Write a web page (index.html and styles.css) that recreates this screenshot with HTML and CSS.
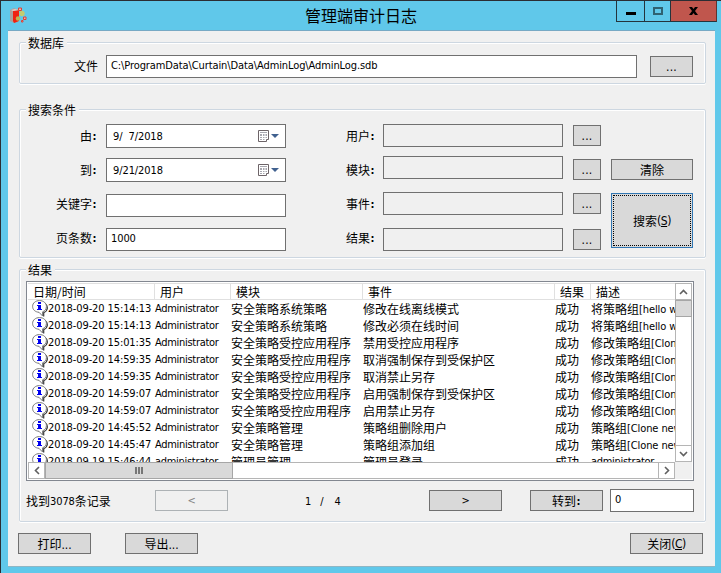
FILE: index.html
```
<!DOCTYPE html>
<html lang="zh-CN">

<head>
    <meta charset="UTF-8">
    <meta name="viewport" content="width=device-width, initial-scale=1.0">
    <title>管理端审计日志</title>
    <link rel="stylesheet" href="styles.css">
</head>

<body>
    <svg class="defs" width="0" height="0">
        <symbol id="info" viewBox="0 0 16 17">
            <path d="M14 4.500q1.500 1.500 1.300 4-.5 3-3.600 4.200v3.800" fill="none" stroke="#333" stroke-width="1.200" />
            <path d="M7.500.6C3.500.6.6 3 .6 6.400s2.700 5.600 6.400 5.900l3.600 3.700v-4.200c2.300-.9 3.800-2.700 3.800-5.300C14.400 3 11.500.6 7.500.6z" fill="#fff" stroke="#777" stroke-width="1" />
            <path d="M6 2h3v2H6zM5 5h4v4h1v1H5V9h1V6H5z" fill="#0000f0" />
        </symbol>
        <symbol id="calendar" viewBox="0 0 11 12">
            <path d="M.5.500h10v9h-2v2h-8z" fill="#fff" stroke="#6d6468" />
            <path d="M2 2h7v1H2zM2 4h2v2H2zM5 4h1.500v2H5zM7.500 4H9v2H7.500zM2 7h2v1H2zM5 7h1.500v1H5zM7.500 7H9v1H7.500zM2 9h2v1H2zM5 9h1.500v1H5z" fill="#a8a8b0" />
        </symbol>
    </svg>

    <div class="window">
        <header class="titlebar">
            <svg class="app-icon" width="17" height="18" viewBox="0 0 17 18">
                <path d="M0 3l4-2 4 2v12l-4 1-4-2z" fill="#a9a09c" />
                <path d="M3 4l6-1v11l-5 2-1-2z" fill="#f02010" />
                <path d="M3 4l6-1-4-1-4 1z" fill="#e8c8c0" />
                <circle cx="12" cy="6.500" r="2.700" fill="#c2cc70" />
                <circle cx="8" cy="11.500" r="2.200" fill="#bdb350" />
                <path d="M8.500 1h3v2.500h-3zM13.500 10H16v2.500h-2.500zM11.500 13.500H13V15h-1.500z" fill="#f2b0a8" stroke="#dd4035" />
            </svg>
            <h1>管理端审计日志</h1>
            <div class="controls">
                <button class="control minimize"><svg width="10" height="3"><rect width="10" height="3" /></svg></button>
                <button class="control maximize"><svg width="10" height="8"><rect x="1" y="1" width="8" height="6" fill="none" stroke="#2f6272" stroke-width="2" /></svg></button>
                <button class="control close"><svg width="9" height="8" viewBox="0 0 9 8"><path d="M0 0h3l1.500 2L6 0h3L6 4l3 4H6L4.500 6 3 8H0l3-4z" /></svg></button>
            </div>
        </header>

        <main class="client">
            <fieldset class="group database">
                <legend>数据库</legend>
                <label>文件</label>
                <div class="field path">C:\ProgramData\Curtain\Data\AdminLog\AdminLog.sdb</div>
                <button class="btn dots">...</button>
            </fieldset>

            <fieldset class="group search">
                <legend>搜索条件</legend>
                <div class="labels">
                    <label>由<b>:</b></label>
                    <label>到<b>:</b></label>
                    <label>关键字<b>:</b></label>
                    <label>页条数<b>:</b></label>
                </div>
                <div class="fields left">
                    <div class="field date"><span>9/&nbsp; 7/2018</span><svg width="11" height="12"><use href="#calendar" /></svg><i class="arrow"></i></div>
                    <div class="field date"><span>9/21/2018</span><svg width="11" height="12"><use href="#calendar" /></svg><i class="arrow"></i></div>
                    <div class="field"></div>
                    <div class="field">1000</div>
                </div>
                <div class="labels second">
                    <label>用户<b>:</b></label>
                    <label>模块<b>:</b></label>
                    <label>事件<b>:</b></label>
                    <label>结果<b>:</b></label>
                </div>
                <div class="fields right">
                    <div class="field readonly"></div>
                    <div class="field readonly"></div>
                    <div class="field readonly"></div>
                    <div class="field readonly"></div>
                </div>
                <div class="pickers">
                    <button class="btn dots">...</button>
                    <button class="btn dots">...</button>
                    <button class="btn dots">...</button>
                    <button class="btn dots">...</button>
                </div>
                <div class="actions">
                    <button class="btn">清除</button>
                    <button class="btn default">搜索<span class="en key">(<u>S</u>)</span></button>
                </div>
            </fieldset>

            <fieldset class="group results">
                <legend>结果</legend>
                <div class="listview">
                    <div class="list-body">
                        <table>
                            <colgroup>
                                <col class="c-date">
                                <col class="c-user">
                                <col class="c-module">
                                <col class="c-event">
                                <col class="c-result">
                                <col class="c-desc">
                            </colgroup>
                            <thead>
                                <tr><th>日期/时间</th><th>用户</th><th>模块</th><th>事件</th><th>结果</th><th>描述</th></tr>
                            </thead>
                            <tbody>
                                <tr><td class="en date-cell"><svg width="16" height="17"><use href="#info" /></svg>2018-09-20 15:14:13</td><td class="en user">Administrator</td><td>安全策略系统策略</td><td>修改在线离线模式</td><td>成功</td><td>将策略组<span class="en">[hello w</span></td></tr>
                                <tr><td class="en date-cell"><svg width="16" height="17"><use href="#info" /></svg>2018-09-20 15:14:13</td><td class="en user">Administrator</td><td>安全策略系统策略</td><td>修改必须在线时间</td><td>成功</td><td>将策略组<span class="en">[hello w</span></td></tr>
                                <tr><td class="en date-cell"><svg width="16" height="17"><use href="#info" /></svg>2018-09-20 15:01:35</td><td class="en user">Administrator</td><td>安全策略受控应用程序</td><td>禁用受控应用程序</td><td>成功</td><td>修改策略组<span class="en">[Clon</span></td></tr>
                                <tr><td class="en date-cell"><svg width="16" height="17"><use href="#info" /></svg>2018-09-20 14:59:35</td><td class="en user">Administrator</td><td>安全策略受控应用程序</td><td>取消强制保存到受保护区</td><td>成功</td><td>修改策略组<span class="en">[Clon</span></td></tr>
                                <tr><td class="en date-cell"><svg width="16" height="17"><use href="#info" /></svg>2018-09-20 14:59:35</td><td class="en user">Administrator</td><td>安全策略受控应用程序</td><td>取消禁止另存</td><td>成功</td><td>修改策略组<span class="en">[Clon</span></td></tr>
                                <tr><td class="en date-cell"><svg width="16" height="17"><use href="#info" /></svg>2018-09-20 14:59:07</td><td class="en user">Administrator</td><td>安全策略受控应用程序</td><td>启用强制保存到受保护区</td><td>成功</td><td>修改策略组<span class="en">[Clon</span></td></tr>
                                <tr><td class="en date-cell"><svg width="16" height="17"><use href="#info" /></svg>2018-09-20 14:59:07</td><td class="en user">Administrator</td><td>安全策略受控应用程序</td><td>启用禁止另存</td><td>成功</td><td>修改策略组<span class="en">[Clon</span></td></tr>
                                <tr><td class="en date-cell"><svg width="16" height="17"><use href="#info" /></svg>2018-09-20 14:45:52</td><td class="en user">Administrator</td><td>安全策略管理</td><td>策略组删除用户</td><td>成功</td><td>策略组<span class="en">[Clone new</span></td></tr>
                                <tr><td class="en date-cell"><svg width="16" height="17"><use href="#info" /></svg>2018-09-20 14:45:47</td><td class="en user">Administrator</td><td>安全策略管理</td><td>策略组添加组</td><td>成功</td><td>策略组<span class="en">[Clone new</span></td></tr>
                                <tr><td class="en date-cell"><svg width="16" height="17"><use href="#info" /></svg>2018-09-19 15:46:44</td><td class="en user">administrator</td><td>管理员管理</td><td>管理员登录</td><td>成功</td><td class="en user">administrator</td></tr>
                            </tbody>
                        </table>
                    </div>
                    <div class="vscroll">
                        <div class="scroll-btn"><svg width="9" height="6"><path d="M1 5l3.500-3.500L8 5" /></svg></div>
                        <div class="thumb"></div>
                        <div class="scroll-btn end"><svg width="9" height="6"><path d="M1 1l3.500 3.500L8 1" /></svg></div>
                    </div>
                    <div class="hscroll">
                        <div class="scroll-btn"><svg width="6" height="9"><path d="M5 1L1.500 4.500 5 8" /></svg></div>
                        <div class="thumb"><i></i><i></i><i></i></div>
                        <div class="scroll-btn end"><svg width="6" height="9"><path d="M1 1l3.500 3.500L1 8" /></svg></div>
                    </div>
                </div>
                <div class="pager">
                    <span class="found">找到<span class="en">3078</span>条记录</span>
                    <button class="btn en" disabled>&lt;</button>
                    <span class="pages en"><span>1</span><span>/</span><span>4</span></span>
                    <button class="btn en">&gt;</button>
                    <button class="btn goto">转到<b>:</b></button>
                    <div class="field page-no">0</div>
                </div>
            </fieldset>

            <footer class="footer">
                <button class="btn">打印<span class="en ellipsis">...</span></button>
                <button class="btn">导出<span class="en ellipsis">...</span></button>
                <button class="btn close-btn">关闭<span class="en key">(<u>C</u>)</span></button>
            </footer>
        </main>
    </div>
</body>

</html>
```
FILE: styles.css
```
:root {
    --frame: #60c8ea;
    --face: #f0f0f0;
    --button: #d9d9d9;
    --line: #707070;
    --cjk: "Noto Sans CJK SC", sans-serif;
    --latin: "DejaVu Sans Condensed", "Noto Sans CJK SC", sans-serif;
}

* {
    box-sizing: border-box;
}

body {
    margin: 0;
    font: 12px/15px var(--cjk);
    color: #000;
    overflow: hidden;
}

.defs {
    position: absolute;
}

.en {
    font-family: var(--latin);
    font-size: 11px;
    letter-spacing: -0.1px;
}

span.en {
    line-height: 1;
    vertical-align: 1px;
}

.en.key {
    font-size: 12px;
    letter-spacing: -0.5px;
}

.en.ellipsis {
    font-size: 12px;
    vertical-align: 0;
}

b {
    display: inline-block;
    width: 5px;
    font: bold 11px/1 var(--latin);
    text-align: center;
    vertical-align: 1px;
}

.window {
    width: 721px;
    height: 573px;
    padding: 0 6px 6px 7px;
    background: var(--frame);
    border-top: 1px solid #2b2d33;
    border-left: 1px solid #2b2d33;
}

.titlebar {
    display: grid;
    grid-template-columns: 101px 1fr 101px;
    height: 29px;
    margin-right: -2px;
}

.app-icon {
    margin: 6px 0 0 2px;
}

.titlebar h1 {
    margin: 2px 3px 0 0;
    font-size: 16px;
    font-weight: normal;
    line-height: 24px;
    text-align: center;
}

.controls {
    display: flex;
    height: 21px;
}

.control {
    display: flex;
    align-items: center;
    justify-content: center;
    padding: 0;
    background: none;
    border: 1px solid #24343c;
    border-top: 0;
    border-right: 0;
}

.minimize {
    width: 28px;
    padding-top: 4px;
}

.maximize {
    width: 26px;
}

.close {
    width: 47px;
    background: #c0564d;
    border-right: 1px solid #5c3531;
}

.client {
    height: 537px;
    padding: 4px 9px 0 11px;
    background: var(--face);
    border-top: 1px solid #77a9c4;
    border-bottom: 1px solid #8fb6c4;
}

.group {
    display: flex;
    align-items: flex-start;
    min-width: 0;
    margin: 0;
    padding: 0;
    border: 1px solid #cdd7e1;
    border-radius: 2px;
    box-shadow: inset 1px 1px #fff, inset -1px 0 #fff, 0 1px #fff;
}

legend {
    height: 15px;
    margin-left: 6px;
    padding: 0 3px 0 2px;
    background: var(--face);
}

.field {
    height: 23px;
    padding: 2px 4px;
    background: #fff;
    border: 1px solid var(--line);
    font: 11px/15px var(--latin);
    letter-spacing: -0.1px;
    white-space: nowrap;
}

.field.readonly {
    background: var(--face);
}

.btn {
    height: 21px;
    padding: 0;
    background: var(--button);
    border: 1px solid var(--line);
    font-family: var(--cjk);
    font-size: 12px;
    line-height: 17px;
    color: #000;
}

.btn.en {
    font-family: var(--latin);
    font-size: 11px;
}

.btn.dots {
    padding-top: 1px;
    font-family: var(--latin);
    letter-spacing: 0.3px;
}

.btn:disabled {
    background: var(--face);
    border-color: #adb2b5;
    color: #838383;
}

/* database file */
.database {
    height: 49px;
}

.database label {
    width: 78px;
    margin-top: 8px;
    text-align: right;
}

.path {
    width: 531px;
    margin: 5px 13px 0 8px;
}

.database .btn {
    width: 43px;
    margin-top: 6px;
}

/* search conditions */
.search {
    height: 156px;
    margin-top: 18px;
}

.labels {
    display: flex;
    flex-direction: column;
    gap: 19px;
    width: 77px;
    padding-top: 11px;
    text-align: right;
}

.labels.second {
    width: 89px;
}

.fields {
    display: flex;
    flex-direction: column;
    width: 180px;
    margin: 7px 0 0 9px;
}

.fields.right {
    margin-left: 8px;
}

.field.date {
    display: flex;
    align-items: center;
    height: 24px;
    margin-bottom: 10px;
    padding: 0 6px;
}

.date span {
    flex: 1;
}

.date + .date {
    margin-bottom: 12px;
}

.left .field:nth-child(3) {
    margin-bottom: 11px;
}

.right .field {
    margin-bottom: 13px;
}

.right .field:first-child {
    margin-bottom: 9px;
}

.arrow {
    margin-left: 2px;
    border: 4px solid transparent;
    border-top-color: #40618f;
    border-bottom: 0;
}

.pickers {
    display: flex;
    flex-direction: column;
    gap: 13px;
    width: 28px;
    margin: 8px 10px 0;
}

.pickers .btn:last-child {
    margin-top: 2px;
}

.actions {
    display: flex;
    flex-direction: column;
    gap: 13px;
    width: 82px;
    margin-top: 42px;
}

.btn.default {
    height: 55px;
    border-color: #3277b3;
    outline: 1px dotted #000;
    outline-offset: -3px;
}

/* results */
.results {
    display: block;
    height: 260px;
    margin-top: 4px;
}

.listview {
    display: grid;
    grid-template-columns: 647px 17px;
    grid-template-rows: 179px 17px;
    width: 668px;
    height: 200px;
    margin: 4px 0 0 6px;
    padding: 1px;
    background: #fff;
    border: 1px solid #828790;
}

.list-body {
    overflow: hidden;
}

table {
    width: 687px;
    table-layout: fixed;
    border-collapse: separate;
    border-spacing: 0;
    white-space: nowrap;
}

.c-date { width: 127px; }
.c-user { width: 76px; }
.c-module { width: 132px; }
.c-event { width: 192px; }
.c-result { width: 36px; }
.c-desc { width: 124px; }

th {
    height: 17px;
    padding: 0 0 0 5px;
    border: 1px solid #e0e0e0;
    border-left: 0;
    font-weight: normal;
    line-height: 15px;
    text-align: left;
}

td {
    height: 17px;
    padding: 0;
    line-height: 17px;
}

td.user {
    letter-spacing: -0.3px;
}

.date-cell svg {
    margin: 0 0 0 4px;
    vertical-align: top;
}

.scroll-btn {
    display: flex;
    align-items: center;
    justify-content: center;
    width: 17px;
    height: 17px;
    background: #fff;
    border: 1px solid #b5b5b5;
}

.scroll-btn path {
    fill: none;
    stroke: #606060;
    stroke-width: 1.6;
}

.vscroll,
.hscroll {
    display: flex;
    background: #fff;
}

.vscroll {
    flex-direction: column;
    box-shadow: inset 1px 0 #b5b5b5, inset -1px 0 #b5b5b5;
}

.hscroll {
    box-shadow: inset 0 1px #b5b5b5, inset 0 -1px #b5b5b5;
}

.vscroll .end {
    margin-top: auto;
}

.hscroll .end {
    margin-left: auto;
}

.thumb {
    display: flex;
    align-items: center;
    justify-content: center;
    gap: 1px;
    background: var(--button);
    border: 1px solid #a6a6a6;
}

.vscroll .thumb {
    height: 17px;
}

.hscroll .thumb {
    width: 188px;
}

.thumb i {
    width: 2px;
    height: 7px;
    background: #777;
}

.listview::after {
    content: "";
    background: var(--face);
}

.pager {
    display: flex;
    align-items: center;
    height: 23px;
    margin: 8px 0 0 6px;
}

.found {
    width: 129px;
}

.pager .btn {
    width: 73px;
}

.pages {
    display: flex;
    gap: 9px;
    width: 201px;
    padding: 2px 0 0 77px;
}

.pages span:last-child {
    margin-left: 2px;
}

.pager .goto {
    margin-left: 28px;
}

.page-no {
    width: 84px;
    margin-left: 7px;
}

.footer {
    display: flex;
    gap: 34px;
    margin: 11px 3px 0 -1px;
}

.footer .btn {
    width: 73px;
}

.footer .close-btn {
    margin-left: auto;
}
```
